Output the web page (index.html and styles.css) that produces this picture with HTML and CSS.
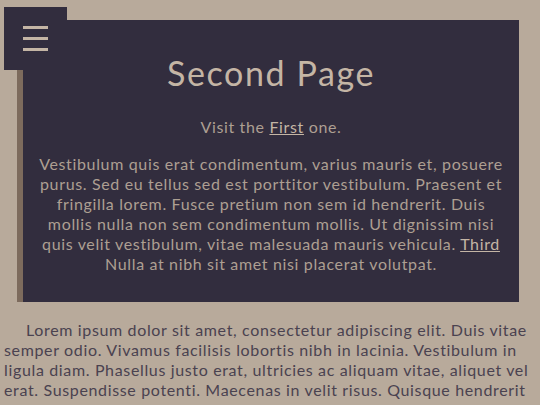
FILE: index.html
```html
<!DOCTYPE html>
<html>
<head>
<meta charset="utf-8">
<link rel="stylesheet" href="styles.css">
</head>
<body>
<button class="menu" aria-label="Menu">
  <span class="bar"></span><span class="bar"></span><span class="bar"></span>
</button>
<main class="card">
  <h1 class="title">Second Page</h1>
  <p class="visit">Visit the <a href="#">First</a> one.</p>
  <p class="lead">Vestibulum quis erat condimentum, varius mauris et, posuere purus. Sed eu tellus sed est porttitor vestibulum. Praesent et fringilla lorem. Fusce pretium non sem id hendrerit. Duis mollis nulla non sem condimentum mollis. Ut dignissim nisi quis velit vestibulum, vitae malesuada mauris vehicula. <a href="#">Third</a> Nulla at nibh sit amet nisi placerat volutpat.</p>
</main>
<p class="body-text">Lorem ipsum dolor sit amet, consectetur adipiscing elit. Duis vitae semper odio. Vivamus facilisis lobortis nibh in lacinia. Vestibulum in ligula diam. Phasellus justo erat, ultricies ac aliquam vitae, aliquet vel erat. Suspendisse potenti. Maecenas in velit risus. Quisque hendrerit scelerisque lorem, id tincidunt ligula lacinia vel. Quisque sed feugiat lorem.</p>
</body>
</html>
```
FILE: styles.css
```css
html, body {
  margin: 0;
  padding: 0;
}
html {
  height: 405px;
  overflow: hidden;
  background: #b8aa9b;
}
body {
  background: #b8aa9b;
  font-family: Lato, "Open Sans", sans-serif;
  font-weight: 400;
  color: #4a4250;
  font-size: 16px;
  line-height: 20px;
  letter-spacing: 0.65px;
  padding: 20px 21px 0 17px;
  overflow: hidden;
  height: 405px;
  box-sizing: border-box;
}
.menu {
  position: absolute;
  left: 4px;
  top: 7px;
  width: 63px;
  height: 63px;
  background: #322d3e;
  border: 0;
  padding: 0;
  display: flex;
  flex-direction: column;
  align-items: center;
  justify-content: center;
  gap: 8px;
  z-index: 2;
}
.bar {
  display: block;
  width: 25px;
  height: 3px;
  background: #c4b5a5;
}
.card {
  background: #322d3e;
  border-left: 6px solid #7d6b5d;
  color: #ad9f92;
  text-align: center;
  padding: 35px 14px 29px 14px;
  height: 282px;
  box-sizing: border-box;
}
.title {
  margin: 0;
  font-size: 34px;
  line-height: 36px;
  font-weight: 400;
  letter-spacing: 1.6px;
  color: #c4b5a5;
}
.visit {
  margin: 26px 0 17px;
}
.lead {
  margin: 0;
}
.card a {
  color: #c4b5a5;
}
.body-text {
  margin: 18px -17px 0 -13px;
  text-indent: 22px;
}
```
